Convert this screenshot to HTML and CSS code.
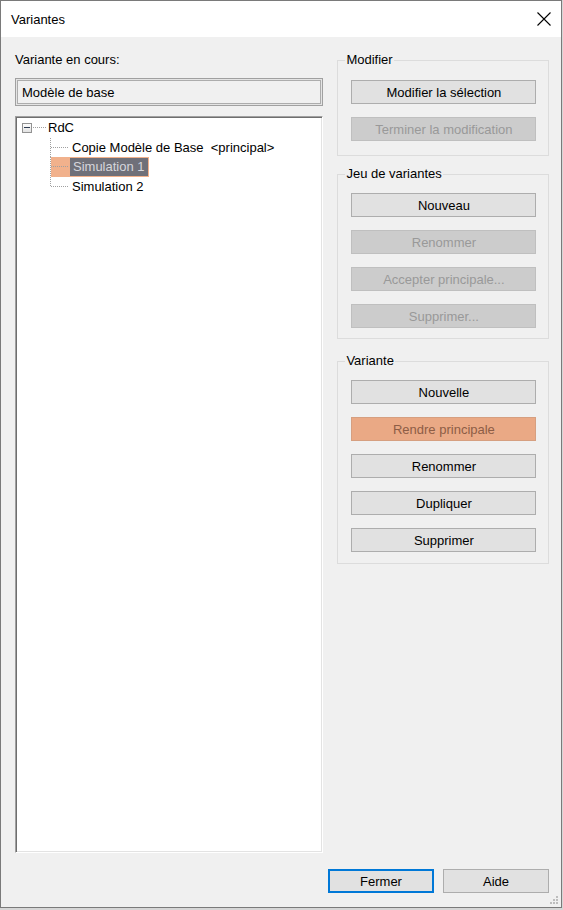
FILE: index.html
```html
<!DOCTYPE html>
<html lang="fr">
<head>
<meta charset="utf-8">
<title>Variantes</title>
<link rel="stylesheet" href="styles.css">
</head>
<body>
<div class="window">
  <div class="titlebar">
    <span class="title">Variantes</span>
    <svg class="close" width="14" height="14" viewBox="0 0 14 14"><path d="M0.5 0.5 L13.5 13.5 M13.5 0.5 L0.5 13.5" stroke="#000" stroke-width="1.1" fill="none"/></svg>
  </div>
  <div class="client">
    <div class="main">
      <div class="left">
        <div class="caption">Variante en cours:</div>
        <div class="current">Modèle de base</div>
        <div class="tree">
          <div class="node root">
            <span class="expander"><span class="minus"></span></span>
            <span class="hline"></span>
            <span class="label">RdC</span>
          </div>
          <div class="children">
            <div class="child"><span class="branch"></span><span class="label">Copie Modèle de Base  &lt;principal&gt;</span></div>
            <div class="child selected"><span class="branch"></span><span class="label">Simulation 1</span></div>
            <div class="child last"><span class="branch"></span><span class="label">Simulation 2</span></div>
          </div>
        </div>
      </div>
      <div class="right">
        <div class="group g1">
          <span class="legend">Modifier</span>
          <button class="btn">Modifier la sélection</button>
          <button class="btn" disabled>Terminer la modification</button>
        </div>
        <div class="group g2">
          <span class="legend">Jeu de variantes</span>
          <button class="btn">Nouveau</button>
          <button class="btn" disabled>Renommer</button>
          <button class="btn" disabled>Accepter principale...</button>
          <button class="btn" disabled>Supprimer...</button>
        </div>
        <div class="group g3">
          <span class="legend">Variante</span>
          <button class="btn">Nouvelle</button>
          <button class="btn hot">Rendre principale</button>
          <button class="btn">Renommer</button>
          <button class="btn">Dupliquer</button>
          <button class="btn">Supprimer</button>
        </div>
      </div>
    </div>
    <div class="footer">
      <button class="btn small default">Fermer</button>
      <button class="btn small">Aide</button>
    </div>
    <svg class="grip" width="10" height="10" viewBox="0 0 10 10">
      <rect x="7" y="0" width="2" height="2" fill="#bdbdbd"/>
      <rect x="4" y="3" width="2" height="2" fill="#bdbdbd"/>
      <rect x="7" y="3" width="2" height="2" fill="#bdbdbd"/>
      <rect x="1" y="6" width="2" height="2" fill="#bdbdbd"/>
      <rect x="4" y="6" width="2" height="2" fill="#bdbdbd"/>
      <rect x="7" y="6" width="2" height="2" fill="#bdbdbd"/>
    </svg>
  </div>
</div>
</body>
</html>
```
FILE: styles.css
```css
* { box-sizing: border-box; }
html, body { margin: 0; padding: 0; }
body {
  width: 563px;
  height: 910px;
  background: #d6d6d6;
  font-family: "Liberation Sans", Arial, sans-serif;
  font-size: 13px;
  color: #000;
}
.window {
  width: 562px;
  height: 908px;
  border: 1px solid #7a7a7a;
  background: #f0f0f0;
  display: flex;
  flex-direction: column;
}
.titlebar {
  height: 36px;
  flex: none;
  background: #fff;
  display: flex;
  justify-content: space-between;
  align-items: flex-start;
  padding: 11px 10px 0 10px;
}
.title { line-height: 15px; }
.close { display: block; }

.client {
  flex: 1;
  position: relative;
  display: flex;
  flex-direction: column;
  padding: 0 12px 0 14px;
}
.main {
  display: flex;
  gap: 14px;
  height: 816px;
  flex: none;
}
.left {
  width: 309px;
  padding-top: 15px;
  display: flex;
  flex-direction: column;
}
.caption { line-height: 15px; }
.current {
  margin-top: 11px;
  height: 28px;
  border: 1px solid #a0a0a0;
  box-shadow: inset 0 0 0 1px #e4e4e4, inset 0 0 0 2px #acacac;
  padding-left: 6px;
  line-height: 27px;
}
.tree {
  margin-top: 10px;
  height: 737px;
  flex: none;
  background: #fff;
  border: 1px solid;
  border-color: #a0a0a0 #ffffff #ffffff #a0a0a0;
  box-shadow: inset 1px 1px 0 #6e6e6e, inset -1px -1px 0 #e3e3e3;
  padding: 1px 0 0 1px;
}
.node {
  display: flex;
  align-items: center;
  height: 19.5px;
}
.expander {
  margin-left: 5px;
  width: 10px;
  height: 10px;
  border: 1px solid #929292;
  background: linear-gradient(#fdfdfd, #e2e2e2);
  display: flex;
  align-items: center;
  justify-content: center;
}
.minus {
  width: 6px;
  height: 1px;
  background: #2e3c52;
}
.hline {
  width: 13px;
  height: 1px;
  margin-left: 1px;
  background: repeating-linear-gradient(to right, #a0a0a0 0 1px, transparent 1px 2px);
}
.root .label { padding-left: 2px; line-height: 19.5px; }

.children { margin-left: 33px; }
.child {
  position: relative;
  display: flex;
  height: 19.5px;
}
.child::before {
  content: "";
  position: absolute;
  left: 0;
  top: 0;
  bottom: 0;
  width: 1px;
  background: repeating-linear-gradient(to bottom, #a0a0a0 0 1px, transparent 1px 2px);
}
.child.last::before { bottom: 50%; }
.branch {
  width: 18px;
  margin-left: 1px;
  background: repeating-linear-gradient(to right, #a0a0a0 0 1px, transparent 1px 2px) left 0 top 9px / 100% 1px no-repeat;
}
.child .label {
  padding: 0 3px;
  line-height: 19.5px;
  white-space: pre;
}
.child.selected .branch { background-color: #f1b18c; }
.child.selected .label {
  background: #6f7079;
  color: #d6d6dc;
  border: 1px solid #f1b18c;
  line-height: 17.5px;
}

.right {
  width: 212px;
  padding-top: 23px;
}
.group {
  position: relative;
  border: 1px solid #dcdcdc;
  display: flex;
  flex-direction: column;
  gap: 13px;
  padding: 18px 0 0 13px;
}
.g1 { padding-top: 19px; padding-bottom: 14px; }
.g2 { margin-top: 18px; padding-bottom: 10px; }
.g3 { margin-top: 22px; padding-bottom: 11px; }
.legend {
  position: absolute;
  top: -9px;
  left: 7px;
  padding: 0 1px;
  background: #f0f0f0;
  line-height: 15px;
}
.btn {
  width: 185px;
  height: 24px;
  margin: 0;
  padding: 1px 0 0;
  border: 1px solid #adadad;
  background: #e1e1e1;
  font-family: "Liberation Sans", Arial, sans-serif;
  font-size: 13px;
  color: #000;
  text-align: center;
  line-height: 21px;
}
.btn:disabled {
  background: #cccccc;
  border-color: #bfbfbf;
  color: #999999;
}
.btn.hot {
  background: #eaa985;
  border-color: #d69f80;
  color: #8d5d45;
}
.footer {
  display: flex;
  justify-content: flex-end;
  gap: 9px;
  margin-top: 16px;
}
.btn.small { width: 106px; }
.btn.default {
  border: 2px solid #0078d7;
  line-height: 19px;
}
.grip {
  position: absolute;
  right: 2px;
  bottom: 1px;
}
```
